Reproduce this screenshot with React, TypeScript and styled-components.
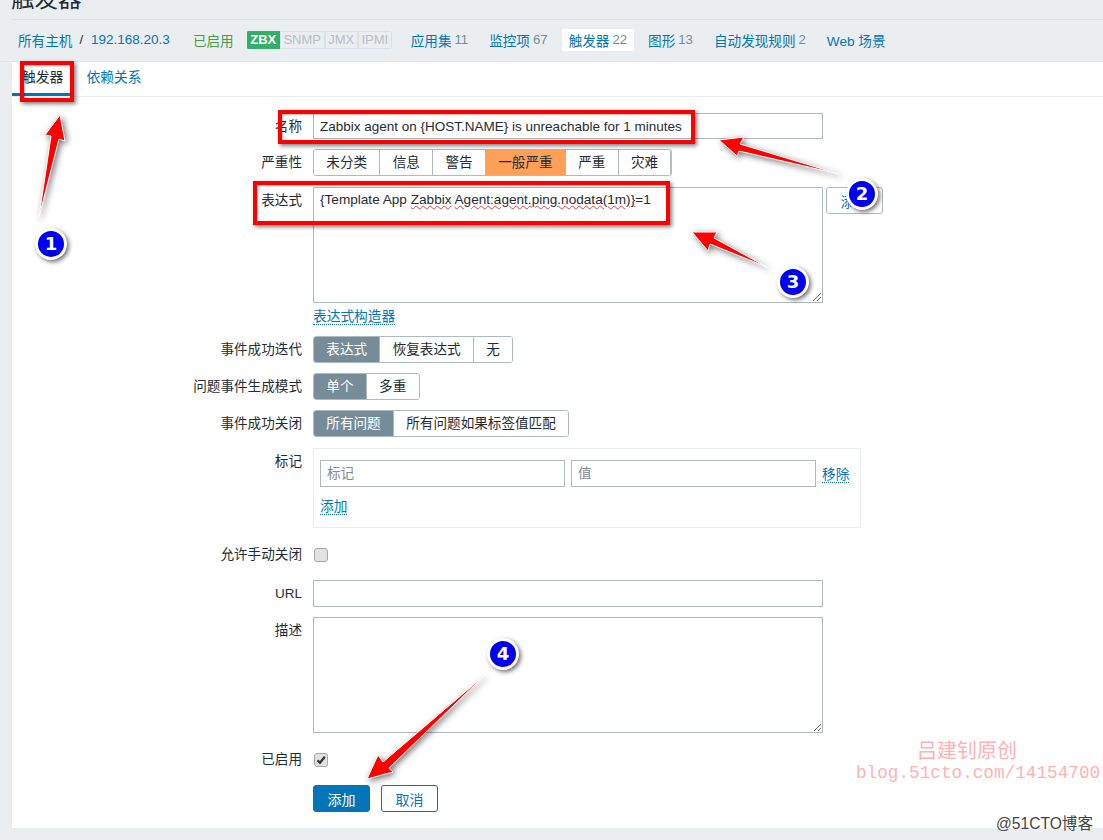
import styled, { createGlobalStyle } from "styled-components";

const GlobalStyle = createGlobalStyle`
    html, body {
        margin: 0;
        padding: 0;
        background: #ebeef0;
        overflow: hidden;
    }
    * {
        box-sizing: border-box;
    }
`

const sans = `"Liberation Sans", "Noto Sans CJK SC", sans-serif`
const blue = "#0275b8"
const line = "#acbbc2"

const arrows = [
    "39,217 51,136 45,135 60,115 65,141 59,139",
    "719,140 744,137 740,144 839,174 739,151 737,156",
    "692,232 717,232 714,238 767,267 710,244 708,251",
    "367,779 378,755 383,762 485,675 389,768 393,772",
]

const marks = [
    {x: 20, y: 61, w: 54, h: 41},
    {x: 278, y: 110, w: 417, h: 34},
    {x: 253, y: 181, w: 417, h: 44},
]

const badges = [
    {x: 51, y: 244, n: 1},
    {x: 862, y: 194, n: 2},
    {x: 793, y: 282, n: 3},
    {x: 503, y: 654, n: 4},
]

const navLinks = [
    {text: "应用集", count: "11"},
    {text: "监控项", count: "67"},
    {text: "触发器", count: "22", active: true},
    {text: "图形", count: "13"},
    {text: "自动发现规则", count: "2"},
    {text: "Web 场景"},
]

const severities = ["未分类", "信息", "警告", "一般严重", "严重", "灾难"]

const Grip = () => (
    <GripIcon width="11" height="11" viewBox="0 0 11 11">
        <path d="M2 10 L10 2 M6 10 L10 6" stroke="#666" strokeWidth="1" fill="none"/>
    </GripIcon>
)

const Check = (props: {checked?: boolean}) => (
    <CheckBox>
        {props.checked && (
            <svg width="10" height="10" viewBox="0 0 10 10">
                <path d="M1.5 5.2 L4 7.8 L8.8 1.8" stroke="#333" strokeWidth="2.2" fill="none"/>
            </svg>
        )}
    </CheckBox>
)

export default function App() {
    return (
        <Page>
            <GlobalStyle/>
            <Header>
                <Title>触发器</Title>
            </Header>
            <Nav>
                <Crumbs>
                    <Link>所有主机</Link>
                    <Slash>/</Slash>
                    <Link $latin>192.168.20.3</Link>
                </Crumbs>
                <Status>已启用</Status>
                <Tags>
                    <Tag $on>ZBX</Tag>
                    <Tag>SNMP</Tag>
                    <Tag>JMX</Tag>
                    <Tag>IPMI</Tag>
                </Tags>
                <NavList>
                    {navLinks.map((item) => (
                        <NavItem key={item.text} $active={item.active}>
                            <Link>{item.text}</Link>
                            {item.count && <Count>{item.count}</Count>}
                        </NavItem>
                    ))}
                </NavList>
            </Nav>
            <Panel>
                <Tabs>
                    <Tab $active>触发器</Tab>
                    <Tab>依赖关系</Tab>
                </Tabs>
                <Form>
                    <Row>
                        <Label>名称</Label>
                        <NameInput readOnly value="Zabbix agent on {HOST.NAME} is unreachable for 1 minutes"/>
                    </Row>
                    <Row>
                        <Label>严重性</Label>
                        <Segments $disaster>
                            {severities.map((name, i) => (
                                <Segment key={name} $orange={i === 3} $last={i === 5}>{name}</Segment>
                            ))}
                        </Segments>
                    </Row>
                    <Row $tight>
                        <Label>表达式</Label>
                        <div>
                            <ExpressionLine>
                                <ExpressionBox>
                                    {"{Template App "}<Wavy>Zabbix</Wavy> <Wavy>{"Agent:agent.ping.nodata(1m)}"}</Wavy>=1
                                    <Grip/>
                                </ExpressionBox>
                                <SmallButton>添加</SmallButton>
                            </ExpressionLine>
                            <BuilderLink>表达式构造器</BuilderLink>
                        </div>
                    </Row>
                    <Row $tight>
                        <Label>事件成功迭代</Label>
                        <Segments>
                            <Segment $selected>表达式</Segment>
                            <Segment>恢复表达式</Segment>
                            <Segment $last>无</Segment>
                        </Segments>
                    </Row>
                    <Row>
                        <Label>问题事件生成模式</Label>
                        <Segments>
                            <Segment $selected>单个</Segment>
                            <Segment $last>多重</Segment>
                        </Segments>
                    </Row>
                    <Row>
                        <Label>事件成功关闭</Label>
                        <Segments>
                            <Segment $selected>所有问题</Segment>
                            <Segment $last>所有问题如果标签值匹配</Segment>
                        </Segments>
                    </Row>
                    <Row $tight>
                        <Label>标记</Label>
                        <TagBox>
                            <TagLine>
                                <TagInput readOnly placeholder="标记"/>
                                <TagInput readOnly placeholder="值"/>
                                <RemoveLink>移除</RemoveLink>
                            </TagLine>
                            <DottedLink>添加</DottedLink>
                        </TagBox>
                    </Row>
                    <CheckRow>
                        <CheckLabel>允许手动关闭</CheckLabel>
                        <Check/>
                    </CheckRow>
                    <Row>
                        <Label $latin>URL</Label>
                        <TextInput readOnly/>
                    </Row>
                    <Row>
                        <Label>描述</Label>
                        <TextArea readOnly/>
                    </Row>
                    <CheckRow>
                        <CheckLabel>已启用</CheckLabel>
                        <Check checked/>
                    </CheckRow>
                    <Row>
                        <Label/>
                        <Actions>
                            <PrimaryButton>添加</PrimaryButton>
                            <OutlineButton>取消</OutlineButton>
                        </Actions>
                    </Row>
                </Form>
            </Panel>

            <Annotations width="1103" height="840" viewBox="0 0 1103 840">
                {arrows.map((points) => (
                    <polygon key={points} points={points} fill="#ff0000" stroke="#ffffff" strokeWidth="1"/>
                ))}
            </Annotations>
            {marks.map((m) => (
                <RedMark key={m.x} $x={m.x} $y={m.y} $w={m.w} $h={m.h}/>
            ))}
            {badges.map((b) => (
                <Badge key={b.n} $x={b.x} $y={b.y}>{b.n}</Badge>
            ))}
            <Watermark>
                <WatermarkName>吕建钊原创</WatermarkName>
                <WatermarkUrl>blog.51cto.com/14154700</WatermarkUrl>
            </Watermark>
            <Stamp>@51CTO博客</Stamp>
        </Page>
    )
}

const Page = styled.div`
    position: relative;
    width: 1103px;
    height: 840px;
    overflow: hidden;
    background: #ebeef0;
    color: #1f2c33;
    font-family: ${sans};
    font-size: 14px;
`

const Header = styled.header`
    height: 20px;
    margin-left: 11px;
    border-bottom: 1px solid #dfe4e7;
    display: flex;
    align-items: flex-end;
    overflow: hidden;
`

const Title = styled.h1`
    margin: 0 0 5px;
    font-size: 23.5px;
    line-height: 30px;
    font-weight: 400;
    flex: none;
`

const Nav = styled.nav`
    height: 42px;
    padding: 0 0 2px 18px;
    display: flex;
    align-items: center;
    border-bottom: 1px solid #dfe4e7;
`

const Crumbs = styled.div`
    display: flex;
    align-items: center;
`

const Link = styled.span<{$latin?: boolean}>`
    color: ${blue};
    font-size: ${(p) => (p.$latin ? "13.5px" : "13.6px")};
    white-space: nowrap;
`

const Slash = styled.span`
    margin: 0 8px 0 7px;
    font-size: 13.2px;
    color: #1f2c33;
`

const Status = styled.span`
    margin-left: 23px;
    font-size: 13.6px;
    color: #429e47;
`

const Tags = styled.div`
    margin-left: 13px;
    display: flex;
    height: 18px;
    border-radius: 2px;
    overflow: hidden;
`

const Tag = styled.span<{$on?: boolean}>`
    padding: 0 2.6px;
    font-size: 13px;
    line-height: 16px;
    font-weight: ${(p) => (p.$on ? 700 : 400)};
    color: ${(p) => (p.$on ? "#ffffff" : "#b4c0c8")};
    background: ${(p) => (p.$on ? "#34af67" : "#ebeef0")};
    border: 1px solid ${(p) => (p.$on ? "#34af67" : "#dae0e4")};
    min-width: 33px;
    text-align: center;
`

const NavList = styled.div`
    margin-left: 12px;
    display: flex;
    align-items: center;
    gap: 7px;
`

const NavItem = styled.div<{$active?: boolean}>`
    padding: 0 7px;
    height: 22px;
    display: flex;
    align-items: center;
    gap: 3px;
    border-radius: 2px;
    background: ${(p) => (p.$active ? "#ffffff" : "transparent")};
`

const Count = styled.span`
    color: #768d99;
    font-size: 13.2px;
`

const Panel = styled.main`
    margin-left: 12px;
    height: 766px;
    background: #ffffff;
`

const Tabs = styled.div`
    height: 35px;
    display: flex;
    border-bottom: 1px solid #ebeef0;
`

const Tab = styled.div<{$active?: boolean}>`
    height: 34px;
    padding: 0 10px;
    margin-right: 3px;
    font-size: 13.8px;
    line-height: 31px;
    color: ${(p) => (p.$active ? "#1f2c33" : blue)};
    border-bottom: 3px solid ${(p) => (p.$active ? blue : "transparent")};
`

const Form = styled.form`
    padding-top: 16px;
    display: flex;
    flex-direction: column;
    gap: 10px;
`

const Row = styled.div<{$tight?: boolean}>`
    margin-top: ${(p) => (p.$tight ? "1px" : "0")};
    display: flex;
    align-items: flex-start;
    gap: 11px;
`

const CheckRow = styled(Row)`
    height: 32px;
    padding-top: 2px;
    align-items: center;
`

const Label = styled.label<{$latin?: boolean}>`
    width: 290px;
    height: 26px;
    flex: none;
    text-align: right;
    line-height: 28px;
    font-size: ${(p) => (p.$latin ? "13.5px" : "13.6px")};
    white-space: nowrap;
`

const CheckLabel = styled(Label)`
    line-height: 26px;
`

const TextInput = styled.input`
    width: 510px;
    height: 27px;
    padding: 0 6px;
    border: 1px solid ${line};
    border-radius: 0;
    outline: none;
    background: #ffffff;
    color: #1f2c33;
    font-family: ${sans};
    font-size: 13.5px;
`

const NameInput = styled(TextInput)`
    height: 26px;
`

const Segments = styled.div<{$disaster?: boolean}>`
    display: inline-flex;
    height: 27px;
    border: 1px solid ${line};
    border-radius: 3px;
    overflow: hidden;
    box-shadow: ${(p) => (p.$disaster ? "1px 0 0 #f2a7a7" : "none")};
`

const Segment = styled.div<{$selected?: boolean, $orange?: boolean, $last?: boolean}>`
    padding: 0 12.3px;
    line-height: 26px;
    font-size: 13.6px;
    white-space: nowrap;
    border-right: ${(p) => (p.$last ? "none" : `1px solid ${line}`)};
    color: ${(p) => (p.$selected ? "#ffffff" : "#1f2c33")};
    background: ${(p) => (p.$selected ? "#768d99" : p.$orange ? "#ffa059" : "#ffffff")};
`

const ExpressionLine = styled.div`
    display: flex;
    align-items: flex-start;
    gap: 3px;
`

const ExpressionBox = styled.div`
    position: relative;
    width: 510px;
    height: 116px;
    padding: 4px 6px;
    border: 1px solid ${line};
    font-size: 13.6px;
    line-height: 15px;
`

const Wavy = styled.span`
    text-decoration: underline wavy #e04040 1px;
`

const GripIcon = styled.svg`
    position: absolute;
    right: 0;
    bottom: 0;
`

const SmallButton = styled.button`
    width: 57px;
    height: 27px;
    padding: 0;
    border: 1px solid ${line};
    border-radius: 3px;
    background: #ffffff;
    color: ${blue};
    font-family: ${sans};
    font-size: 14px;
`

const DottedLink = styled.span`
    color: ${blue};
    font-size: 13.7px;
    line-height: 15px;
    border-bottom: 1px dotted ${blue};
    white-space: nowrap;
    align-self: flex-start;
`

const BuilderLink = styled(DottedLink)`
    display: block;
    width: fit-content;
    margin-top: 6px;
`

const RemoveLink = styled(DottedLink)`
    align-self: center;
    margin-top: 2px;
`

const TagBox = styled.div`
    width: 548px;
    height: 80px;
    padding: 11px 6px;
    border: 1px solid #ebeef0;
    display: flex;
    flex-direction: column;
    gap: 12px;
`

const TagLine = styled.div`
    display: flex;
    align-items: center;
    gap: 6px;
`

const TagInput = styled(TextInput)`
    width: 245px;
    &::placeholder {
        color: #7f8c92;
        font-size: 13.6px;
    }
`

const CheckBox = styled.span`
    width: 14px;
    height: 14px;
    margin-left: 1px;
    display: flex;
    align-items: center;
    justify-content: center;
    border: 1px solid #a8a8a8;
    border-radius: 3px;
    background: #e2e2e2;
`

const TextArea = styled.textarea`
    width: 510px;
    height: 116px;
    border: 1px solid ${line};
    border-radius: 0;
    outline: none;
    display: block;
    background: #ffffff;
`

const Actions = styled.div`
    display: flex;
    gap: 11px;
`

const PrimaryButton = styled.button`
    width: 57px;
    height: 27px;
    padding: 0;
    border: 1px solid ${blue};
    border-radius: 3px;
    background: ${blue};
    color: #ffffff;
    font-family: ${sans};
    font-size: 14px;
`

const OutlineButton = styled(PrimaryButton)`
    background: #ffffff;
    color: ${blue};
`

const Annotations = styled.svg`
    position: absolute;
    left: 0;
    top: 0;
    pointer-events: none;
    filter: drop-shadow(2px 2px 3px rgba(0, 0, 0, 0.55));
`

const RedMark = styled.div<{$x: number, $y: number, $w: number, $h: number}>`
    position: absolute;
    left: ${(p) => p.$x}px;
    top: ${(p) => p.$y}px;
    width: ${(p) => p.$w}px;
    height: ${(p) => p.$h}px;
    border: 4px solid #ff0000;
    box-shadow: 2px 2px 4px rgba(0, 0, 0, 0.5), inset 1px 1px 2px rgba(0, 0, 0, 0.3);
`

const Badge = styled.div<{$x: number, $y: number}>`
    position: absolute;
    left: ${(p) => p.$x - 16}px;
    top: ${(p) => p.$y - 16}px;
    width: 32px;
    height: 32px;
    border: 3px solid #ffffff;
    border-radius: 50%;
    background: #0000f0;
    box-shadow: 2px 2px 4px rgba(0, 0, 0, 0.55);
    color: #ffffff;
    font-family: "DejaVu Sans", sans-serif;
    font-size: 18px;
    font-weight: 700;
    line-height: 26px;
    text-align: center;
`

const Watermark = styled.div`
    position: absolute;
    right: 3px;
    top: 738px;
    width: 244px;
    text-align: center;
    color: #ffb2b2;
`

const WatermarkName = styled.div`
    padding-right: 22px;
    font-family: "Noto Sans CJK SC", serif;
    font-size: 20px;
    line-height: 24px;
`

const WatermarkUrl = styled.div`
    font-family: "Liberation Mono", monospace;
    font-size: 17.7px;
    line-height: 22px;
    white-space: nowrap;
`

const Stamp = styled.div`
    position: absolute;
    left: 996px;
    top: 814px;
    font-size: 15.6px;
    line-height: 20px;
    color: #444444;
    white-space: nowrap;
`
